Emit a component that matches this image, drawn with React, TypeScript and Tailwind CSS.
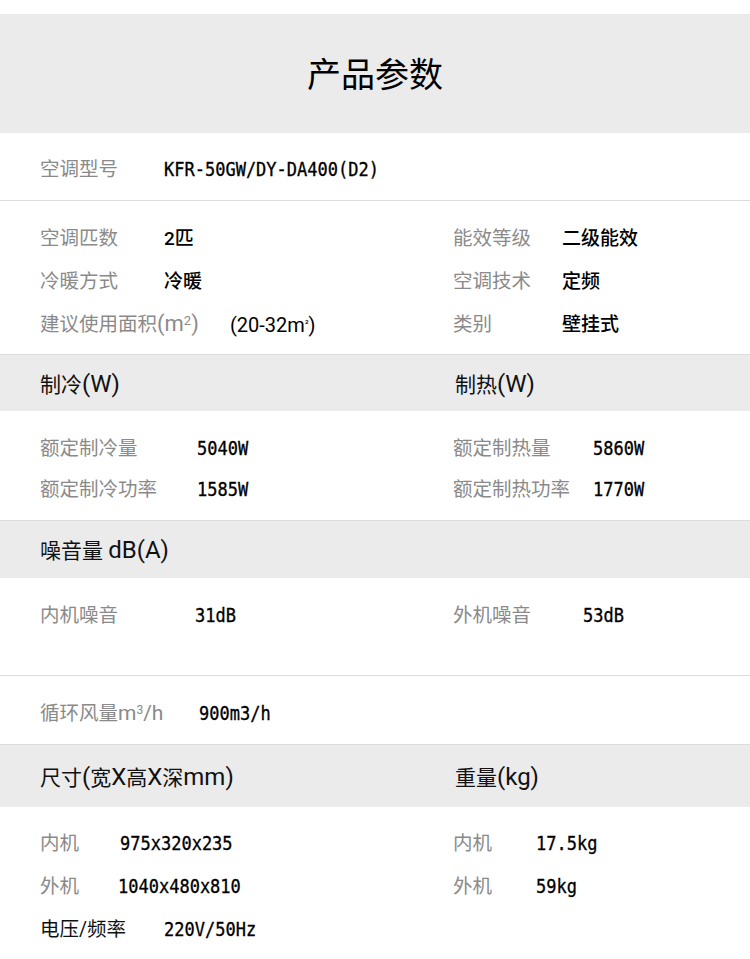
import React from "react";

const cjk = "font-['Roboto','Noto_Sans_CJK_SC',sans-serif]";
const mono = "font-['DejaVu_Sans_Mono','Noto_Sans_CJK_SC',monospace]";

interface CellProps {
  label: React.ReactNode;
  value: React.ReactNode;
  labelW: string;
  valueFont?: "mono" | "cjk";
  dark?: boolean;
}

function Cell({ label, value, labelW, valueFont = "mono", dark }: CellProps) {
  return (
    <div className="flex items-center pt-[7px]">
      <span className={`${labelW} shrink-0 text-[19.5px] ${dark ? "text-[#111]" : "text-[#8a8a8a]"} ${cjk}`}>{label}</span>
      {valueFont === "mono" ? (
        <span className={`inline-block scale-y-[1.15] text-[17px] font-medium text-black [-webkit-text-stroke:0.3px_black] ${mono}`}>{value}</span>
      ) : (
        <span className={`text-[19px] font-medium text-black ${cjk}`}>{value}</span>
      )}
    </div>
  );
}

// latin part in the headers and labels is set larger than the hanzi
function L({ children, size = "text-[24px]" }: { children: React.ReactNode; size?: string }) {
  return <span className={`${size} leading-none`}>{children}</span>;
}

function Header({ left, right, h }: { left: React.ReactNode; right?: React.ReactNode; h: string }) {
  return (
    <div className={`grid grid-cols-[413px_1fr] items-center ${h} pt-[5px] bg-[#ebebeb] border-t border-[#dcdcdc] pl-[40px] text-[21px] text-[#111] ${cjk}`}>
      <span>{left}</span>
      {right && <span className="pl-[2px]">{right}</span>}
    </div>
  );
}

export default function App() {
  return (
    <div className="w-[750px] h-[959px] bg-white overflow-hidden">
      <div className="h-[14px]" />
      <div className="h-[119px] pt-[4px] bg-[#ebebeb] flex items-center justify-center">
        <h1 className={`text-[34px] text-black ${cjk}`}>产品参数</h1>
      </div>

      {/* 型号 */}
      <div className="h-[68px] flex items-center pl-[40px] border-b border-[#dcdcdc]">
        <Cell label="空调型号" labelW="w-[124px]" value="KFR-50GW/DY-DA400(D2)" />
      </div>

      {/* 基本参数 */}
      <div className="pt-[13px] pb-[11px] pl-[40px] grid grid-cols-[413px_1fr] auto-rows-[43px]">
        <Cell label="空调匹数" labelW="w-[124px]" value="2匹" valueFont="cjk" />
        <Cell label="能效等级" labelW="w-[109px]" value="二级能效" valueFont="cjk" />
        <Cell label="冷暖方式" labelW="w-[124px]" value="冷暖" valueFont="cjk" />
        <Cell label="空调技术" labelW="w-[109px]" value="定频" valueFont="cjk" />
        <Cell
          label={<span>建议使用面积<L size="text-[22px]">(m<sup className="text-[13px]">2</sup>)</L></span>}
          labelW="w-[190px]"
          value={<span className="font-normal text-[20px]">(20-32m<sup className="text-[10px]">²</sup>)</span>}
          valueFont="cjk"
        />
        <Cell label="类别" labelW="w-[109px]" value="壁挂式" valueFont="cjk" />
      </div>

      <Header left={<>制冷<L>(W)</L></>} right={<>制热<L>(W)</L></>} h="h-[57px]" />
      <div className="pt-[14px] pb-[13px] pl-[40px] grid grid-cols-[413px_1fr] auto-rows-[41px]">
        <Cell label="额定制冷量" labelW="w-[157px]" value="5040W" />
        <Cell label="额定制热量" labelW="w-[140px]" value="5860W" />
        <Cell label="额定制冷功率" labelW="w-[157px]" value="1585W" />
        <Cell label="额定制热功率" labelW="w-[140px]" value="1770W" />
      </div>

      <Header left={<>噪音量 <L>dB(A)</L></>} h="h-[58px]" />
      <div className="h-[98px] pt-[14px] pl-[40px] grid grid-cols-[413px_1fr] auto-rows-[41px] border-b border-[#dcdcdc]">
        <Cell label="内机噪音" labelW="w-[155px]" value="31dB" />
        <Cell label="外机噪音" labelW="w-[130px]" value="53dB" />
      </div>

      <div className="h-[68px] flex items-center pl-[40px]">
        <Cell
          label={<span>循环风量<L size="text-[21px]">m<sup className="text-[12px]">3</sup>/h</L></span>}
          labelW="w-[159px]"
          value="900m3/h"
        />
      </div>

      <Header left={<>尺寸<L>(</L>宽<L>X</L>高<L>X</L>深<L>mm)</L></>} right={<>重量<L>(kg)</L></>} h="h-[63px]" />
      <div className="pt-[12px] pl-[40px] grid grid-cols-[413px_1fr] auto-rows-[43px]">
        <Cell label="内机" labelW="w-[80px]" value="975x320x235" />
        <Cell label="内机" labelW="w-[83px]" value="17.5kg" />
        <Cell label="外机" labelW="w-[78px]" value="1040x480x810" />
        <Cell label="外机" labelW="w-[83px]" value="59kg" />
        <Cell label="电压/频率" labelW="w-[124px]" value="220V/50Hz" dark />
      </div>
    </div>
  );
}
